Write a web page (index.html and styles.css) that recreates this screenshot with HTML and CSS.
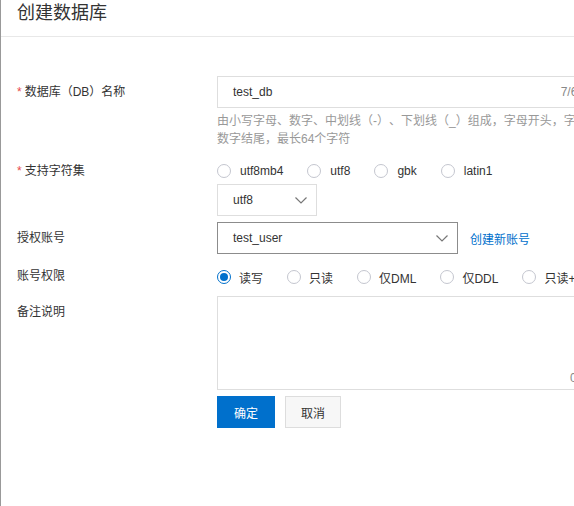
FILE: index.html
```html
<!DOCTYPE html>
<html lang="zh-CN">
<head>
  <meta charset="UTF-8" />
  <meta name="viewport" content="width=device-width, initial-scale=1.0"/>
  <title>创建数据库</title>
  <link rel="stylesheet" href="styles.css">
</head>
<body>

  <div class="panel">
    <div class="panel-header">创建数据库</div>

    <div class="form">
      <!-- 名称 -->
      <div class="form-item item-name">
        <div class="form-label"><span class="req">*</span>数据库（DB）名称</div>
        <div class="form-control">
          <div class="input">
            <span>test_db</span>
            <span class="count">7/64</span>
          </div>
          <div class="help">由小写字母、数字、中划线（-）、下划线（_）组成，字母开头，字母或数字结尾，最长64个字符</div>
        </div>
      </div>

      <!-- 字符集 -->
      <div class="form-item item-charset">
        <div class="form-label short"><span class="req">*</span>支持字符集</div>
        <div class="form-control">
          <div class="radio-group">
            <label class="radio"><span class="dot"></span>utf8mb4</label>
            <label class="radio"><span class="dot"></span>utf8</label>
            <label class="radio"><span class="dot"></span>gbk</label>
            <label class="radio"><span class="dot"></span>latin1</label>
          </div>
          <div class="select select-small">
            <span>utf8</span>
            <svg class="arrow" width="12" height="7" viewBox="0 0 12 7"><path d="M0.5 0.5 L6 6 L11.5 0.5" fill="none" stroke="#777" stroke-width="1.2"/></svg>
          </div>
        </div>
      </div>

      <!-- 账号 -->
      <div class="form-item item-user">
        <div class="form-label">授权账号</div>
        <div class="form-control row">
          <div class="select select-user">
            <span>test_user</span>
            <svg class="arrow" width="12" height="7" viewBox="0 0 12 7"><path d="M0.5 0.5 L6 6 L11.5 0.5" fill="none" stroke="#777" stroke-width="1.2"/></svg>
          </div>
          <a href="#" class="link">创建新账号</a>
        </div>
      </div>

      <!-- 权限 -->
      <div class="form-item item-perm">
        <div class="form-label short">账号权限</div>
        <div class="form-control">
          <div class="radio-group">
            <label class="radio checked"><span class="dot"></span>读写</label>
            <label class="radio"><span class="dot"></span>只读</label>
            <label class="radio"><span class="dot"></span>仅DML</label>
            <label class="radio"><span class="dot"></span>仅DDL</label>
            <label class="radio"><span class="dot"></span>只读+索引</label>
          </div>
        </div>
      </div>

      <!-- 备注 -->
      <div class="form-item item-note">
        <div class="form-label">备注说明</div>
        <div class="form-control">
          <div class="textarea">
            <span class="count">0/256</span>
          </div>
        </div>
      </div>

      <div class="actions">
        <button class="btn btn-primary">确定</button>
        <button class="btn">取消</button>
      </div>
    </div>
  </div>

</body>
</html>
```

FILE: styles.css
```css
body {
  margin: 0;
  padding: 0;
  font-family: "Liberation Sans", "Noto Sans CJK SC", sans-serif;
  font-size: 12px;
  color: #333;
  background: #fff;
  overflow: hidden;
  text-spacing-trim: space-all;
}

.panel {
  width: 760px;
  min-height: 100vh;
  border-left: 1px solid #999;
}

.panel-header {
  height: 36px;
  padding-left: 16px;
  font-size: 18px;
  line-height: 26px;
  color: #333;
  border-bottom: 1px solid #e8e8e8;
}

.form {
  padding-top: 39px;
}

.form-item {
  display: flex;
}

.item-name { margin-bottom: 10px; }
.item-charset { margin-bottom: 6px; }
.item-user { margin-bottom: 9px; }
.item-perm { margin-bottom: 5px; }
.item-note { margin-bottom: 6px; }

.form-label {
  width: 216px;
  flex-shrink: 0;
  box-sizing: border-box;
  padding-left: 16px;
  line-height: 32px;
  color: #333;
}

.form-label.short {
  line-height: 27px;
}

.req {
  color: #e84a4a;
  margin-right: 3px;
}

.form-control.row {
  display: flex;
  align-items: center;
}

.input {
  width: 380px;
  height: 32px;
  box-sizing: border-box;
  border: 1px solid #dedede;
  padding: 0 12px 0 15px;
  display: flex;
  align-items: center;
  justify-content: space-between;
}

.count {
  color: #888;
}

.help {
  width: 394px;
  margin-top: 4px;
  line-height: 18px;
  color: #999;
}

.radio-group {
  display: flex;
  align-items: center;
  height: 26px;
}

.item-perm .radio-group {
  height: 28px;
}

.radio {
  display: flex;
  align-items: center;
  margin-right: 24px;
  white-space: nowrap;
}

.dot {
  width: 14px;
  height: 14px;
  box-sizing: border-box;
  border: 1px solid #c4c6cf;
  border-radius: 50%;
  margin-right: 9px;
  position: relative;
}

.item-perm .dot {
  margin-right: 8px;
}

.radio.checked .dot {
  border-color: #0070cc;
}

.radio.checked .dot::after {
  content: "";
  position: absolute;
  left: 2px;
  top: 2px;
  width: 8px;
  height: 8px;
  border-radius: 50%;
  background: #0070cc;
}

.select {
  height: 32px;
  box-sizing: border-box;
  border: 1px solid #dedede;
  padding: 0 9px 0 15px;
  display: flex;
  align-items: center;
  justify-content: space-between;
}

.select-small {
  width: 100px;
}

.select-user {
  width: 241px;
  border-color: #8c8c8c;
}

.link {
  margin-left: 12px;
  color: #0070cc;
  text-decoration: none;
}

.textarea {
  position: relative;
  width: 400px;
  height: 94px;
  box-sizing: border-box;
  border: 1px solid #dedede;
}

.textarea .count {
  position: absolute;
  right: 16px;
  bottom: 2px;
  line-height: 18px;
}

.actions {
  display: flex;
  gap: 10px;
  padding-left: 216px;
}

.btn {
  height: 32px;
  padding: 0 15px;
  font-family: inherit;
  font-size: 12px;
  color: #333;
  background: #f7f7f7;
  border: 1px solid #ddd;
  cursor: pointer;
}

.btn-primary {
  width: 58px;
  color: #fff;
  background: #0070cc;
  border-color: #0070cc;
}
```
